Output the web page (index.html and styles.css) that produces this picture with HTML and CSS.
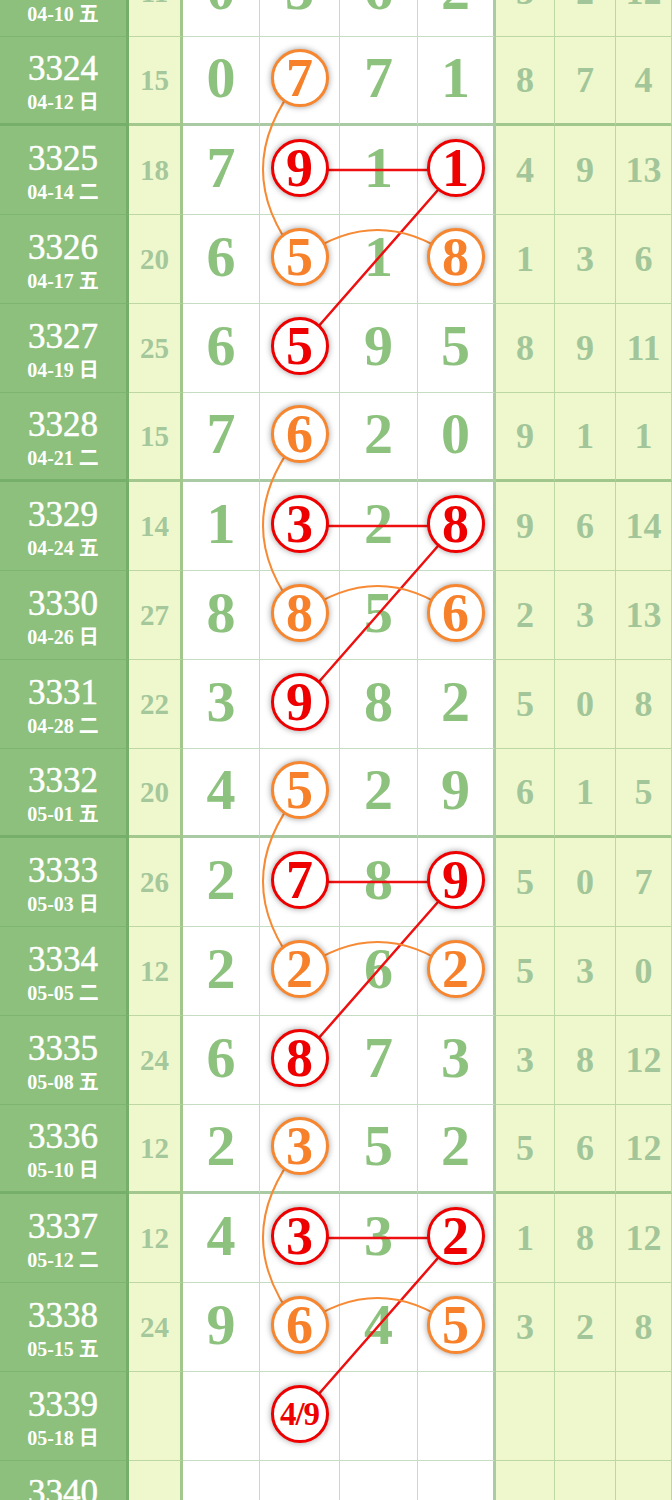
FILE: index.html
```html
<!DOCTYPE html>
<html>

<head>
    <meta charset="UTF-8">
    <title>走势图</title>
    <link rel="stylesheet" href="styles.css">
</head>

<body>
    <div class="chart">
        <div class="row">
            <div class="issue"><b>3323</b><span>04-10 五</span></div>
            <div class="sum">11</div>
            <div class="num">0</div><div class="num">3</div><div class="num">6</div><div class="num">2</div>
            <div class="gap">3</div><div class="gap">2</div><div class="gap">12</div>
        </div>
        <div class="row thick">
            <div class="issue"><b>3324</b><span>04-12 日</span></div>
            <div class="sum">15</div>
            <div class="num">0</div><div class="num"><span class="ball orange">7</span></div><div class="num">7</div><div class="num">1</div>
            <div class="gap">8</div><div class="gap">7</div><div class="gap">4</div>
        </div>
        <div class="row">
            <div class="issue"><b>3325</b><span>04-14 二</span></div>
            <div class="sum">18</div>
            <div class="num">7</div><div class="num"><span class="ball red">9</span></div><div class="num">1</div><div class="num"><span class="ball red">1</span></div>
            <div class="gap">4</div><div class="gap">9</div><div class="gap">13</div>
        </div>
        <div class="row">
            <div class="issue"><b>3326</b><span>04-17 五</span></div>
            <div class="sum">20</div>
            <div class="num">6</div><div class="num"><span class="ball orange">5</span></div><div class="num">1</div><div class="num"><span class="ball orange">8</span></div>
            <div class="gap">1</div><div class="gap">3</div><div class="gap">6</div>
        </div>
        <div class="row">
            <div class="issue"><b>3327</b><span>04-19 日</span></div>
            <div class="sum">25</div>
            <div class="num">6</div><div class="num"><span class="ball red">5</span></div><div class="num">9</div><div class="num">5</div>
            <div class="gap">8</div><div class="gap">9</div><div class="gap">11</div>
        </div>
        <div class="row thick">
            <div class="issue"><b>3328</b><span>04-21 二</span></div>
            <div class="sum">15</div>
            <div class="num">7</div><div class="num"><span class="ball orange">6</span></div><div class="num">2</div><div class="num">0</div>
            <div class="gap">9</div><div class="gap">1</div><div class="gap">1</div>
        </div>
        <div class="row">
            <div class="issue"><b>3329</b><span>04-24 五</span></div>
            <div class="sum">14</div>
            <div class="num">1</div><div class="num"><span class="ball red">3</span></div><div class="num">2</div><div class="num"><span class="ball red">8</span></div>
            <div class="gap">9</div><div class="gap">6</div><div class="gap">14</div>
        </div>
        <div class="row">
            <div class="issue"><b>3330</b><span>04-26 日</span></div>
            <div class="sum">27</div>
            <div class="num">8</div><div class="num"><span class="ball orange">8</span></div><div class="num">5</div><div class="num"><span class="ball orange">6</span></div>
            <div class="gap">2</div><div class="gap">3</div><div class="gap">13</div>
        </div>
        <div class="row">
            <div class="issue"><b>3331</b><span>04-28 二</span></div>
            <div class="sum">22</div>
            <div class="num">3</div><div class="num"><span class="ball red">9</span></div><div class="num">8</div><div class="num">2</div>
            <div class="gap">5</div><div class="gap">0</div><div class="gap">8</div>
        </div>
        <div class="row thick">
            <div class="issue"><b>3332</b><span>05-01 五</span></div>
            <div class="sum">20</div>
            <div class="num">4</div><div class="num"><span class="ball orange">5</span></div><div class="num">2</div><div class="num">9</div>
            <div class="gap">6</div><div class="gap">1</div><div class="gap">5</div>
        </div>
        <div class="row">
            <div class="issue"><b>3333</b><span>05-03 日</span></div>
            <div class="sum">26</div>
            <div class="num">2</div><div class="num"><span class="ball red">7</span></div><div class="num">8</div><div class="num"><span class="ball red">9</span></div>
            <div class="gap">5</div><div class="gap">0</div><div class="gap">7</div>
        </div>
        <div class="row">
            <div class="issue"><b>3334</b><span>05-05 二</span></div>
            <div class="sum">12</div>
            <div class="num">2</div><div class="num"><span class="ball orange">2</span></div><div class="num">6</div><div class="num"><span class="ball orange">2</span></div>
            <div class="gap">5</div><div class="gap">3</div><div class="gap">0</div>
        </div>
        <div class="row">
            <div class="issue"><b>3335</b><span>05-08 五</span></div>
            <div class="sum">24</div>
            <div class="num">6</div><div class="num"><span class="ball red">8</span></div><div class="num">7</div><div class="num">3</div>
            <div class="gap">3</div><div class="gap">8</div><div class="gap">12</div>
        </div>
        <div class="row thick">
            <div class="issue"><b>3336</b><span>05-10 日</span></div>
            <div class="sum">12</div>
            <div class="num">2</div><div class="num"><span class="ball orange">3</span></div><div class="num">5</div><div class="num">2</div>
            <div class="gap">5</div><div class="gap">6</div><div class="gap">12</div>
        </div>
        <div class="row">
            <div class="issue"><b>3337</b><span>05-12 二</span></div>
            <div class="sum">12</div>
            <div class="num">4</div><div class="num"><span class="ball red">3</span></div><div class="num">3</div><div class="num"><span class="ball red">2</span></div>
            <div class="gap">1</div><div class="gap">8</div><div class="gap">12</div>
        </div>
        <div class="row">
            <div class="issue"><b>3338</b><span>05-15 五</span></div>
            <div class="sum">24</div>
            <div class="num">9</div><div class="num"><span class="ball orange">6</span></div><div class="num">4</div><div class="num"><span class="ball orange">5</span></div>
            <div class="gap">3</div><div class="gap">2</div><div class="gap">8</div>
        </div>
        <div class="row">
            <div class="issue"><b>3339</b><span>05-18 日</span></div>
            <div class="sum"></div>
            <div class="num"></div><div class="num"><span class="ball red small">4/9</span></div><div class="num"></div><div class="num"></div>
            <div class="gap"></div><div class="gap"></div><div class="gap"></div>
        </div>
        <div class="row thick">
            <div class="issue"><b>3340</b><span>05-20 二</span></div>
            <div class="sum"></div>
            <div class="num"></div><div class="num"></div><div class="num"></div><div class="num"></div>
            <div class="gap"></div><div class="gap"></div><div class="gap"></div>
        </div>

        <!-- 连线 -->
        <svg class="links" width="672" height="1500" viewBox="0 0 672 1500">
            <g class="line-red">
                <path d="M299.5 170 H455.5 M455.5 170 L299.5 348" />
                <path d="M299.5 526 H455.5 M455.5 526 L299.5 704" />
                <path d="M299.5 882 H455.5 M455.5 882 L299.5 1060" />
                <path d="M299.5 1238 H455.5 M455.5 1238 L299.5 1416" />
            </g>
            <g class="line-orange">
                <path d="M299.5 80 Q226.5 169.5 299.5 259 M299.5 259 Q377.5 201 455.5 259" />
                <path d="M299.5 436 Q226.5 525.5 299.5 615 M299.5 615 Q377.5 557 455.5 615" />
                <path d="M299.5 792 Q226.5 881.5 299.5 971 M299.5 971 Q377.5 913 455.5 971" />
                <path d="M299.5 1148 Q226.5 1237.5 299.5 1327 M299.5 1327 Q377.5 1269 455.5 1327" />
            </g>
        </svg>
    </div>
</body>

</html>
```

FILE: styles.css
```css
body {
    margin: 0;
    background: #fff;
    font-family: "Liberation Serif", "Noto Sans CJK SC", serif;
}

.chart {
    position: relative;
    margin-top: -52px;
}

.row {
    display: grid;
    grid-template-columns: 129px 54px 77px 80px 78px 78px 59px 61px 56px;
    height: 89px;
}

.row>div {
    display: flex;
    align-items: center;
    justify-content: center;
    box-sizing: border-box;
    border-bottom: 1px solid rgba(100, 160, 90, 0.37);
    border-right: 1px solid rgba(100, 160, 90, 0.37);
    font-weight: bold;
}

.row.thick>div {
    border-bottom-width: 3px;
    border-bottom-color: rgba(100, 160, 90, 0.55);
}

.issue {
    flex-direction: column;
    gap: 5px;
    padding-top: 4px;
    background: #8cc07c;
    color: #fff;
    border-right: 3px solid rgba(100, 160, 90, 0.55) !important;
}

.issue b {
    font-size: 35px;
    font-weight: normal;
    line-height: 34px;
    -webkit-text-stroke: 0.5px #fff;
}

.issue span {
    font-size: 20px;
    line-height: 22px;
}

.sum {
    background: #eff8cc;
    color: #a4c79b;
    font-size: 29px;
    border-right: 3px solid rgba(100, 160, 90, 0.55) !important;
}

.num {
    color: #8cc27d;
    font-size: 58px;
    line-height: 1;
    padding-bottom: 4px;
}

.row>.num:nth-child(6) {
    border-right: 3px solid rgba(100, 160, 90, 0.55);
}

.gap {
    background: #eff8cc;
    color: #a2c699;
    font-size: 36px;
}

.ball {
    position: relative;
    z-index: 2;
    display: flex;
    align-items: center;
    justify-content: center;
    width: 58px;
    height: 58px;
    box-sizing: border-box;
    border-radius: 50%;
    border: 3px solid;
    background: #fff;
    font-size: 54px;
    line-height: 1;
    box-shadow: 0 0 6px rgba(0, 0, 0, 0.4);
}

.ball.red {
    color: #ee0000;
    border-color: #ee0000;
}

.ball.orange {
    color: #f6812a;
    border-color: #f6862f;
}

.ball.small {
    font-size: 33px;
    letter-spacing: -1px;
}

.links {
    position: absolute;
    top: 52px;
    left: 0;
    z-index: 1;
    pointer-events: none;
}

.links path {
    fill: none;
}

.line-red path {
    stroke: #ee1010;
    stroke-width: 2.5;
}

.line-orange path {
    stroke: #f68a35;
    stroke-width: 2;
}
```
